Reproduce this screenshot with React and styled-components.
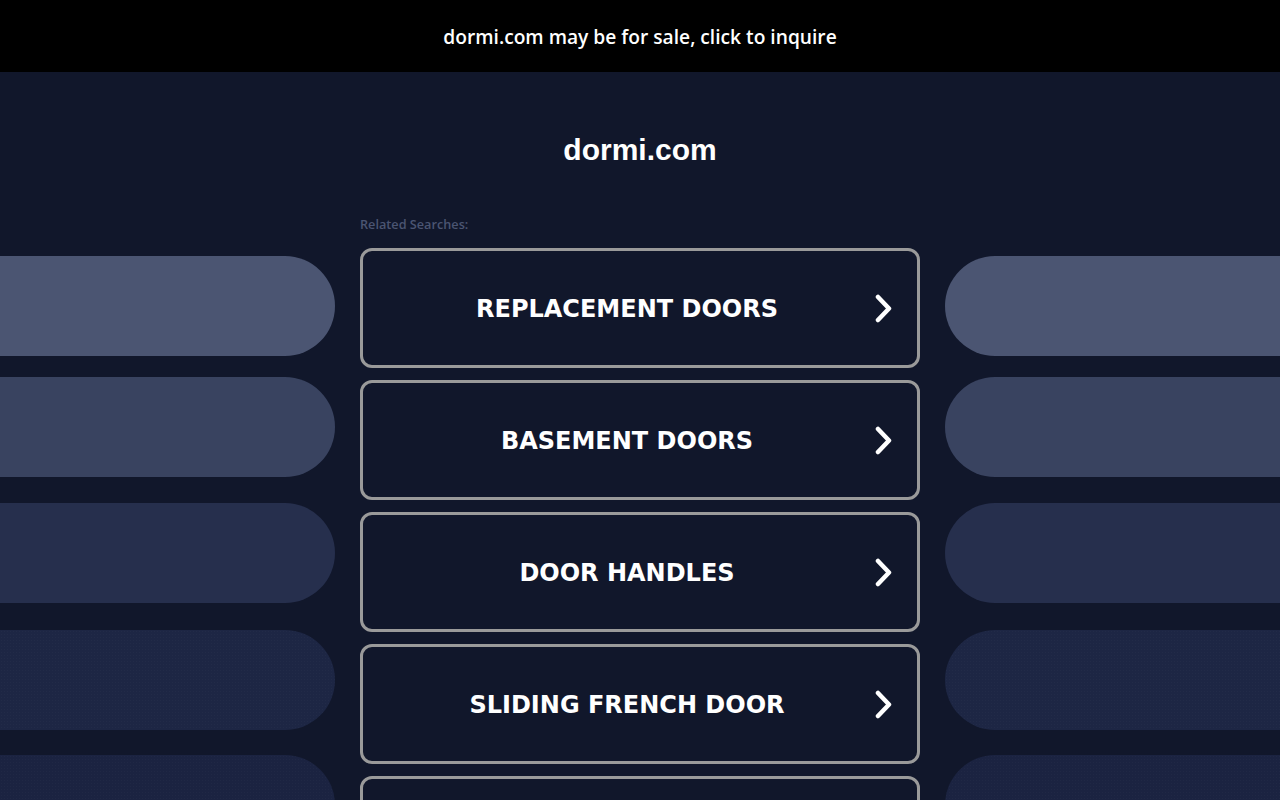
import styled, { createGlobalStyle } from "styled-components";

const searches = [
    "Replacement Doors",
    "Basement Doors",
    "Door Handles",
    "Sliding French Door",
    "Exterior Doors",
];

const pills = [
    { color: "#4b5572", gap: 0, dotted: false },
    { color: "#394360", gap: 21, dotted: false },
    { color: "#262f4d", gap: 26, dotted: false },
    { color: "#1d2644", gap: 27, dotted: true },
    { color: "#1b2341", gap: 25, dotted: true },
];

const GlobalStyle = createGlobalStyle`
    html, body {
        margin: 0;
        padding: 0;
        background: #11172b;
        overflow: hidden;
    }
`;

const Arrow = () => (
    <svg width="20" height="30" viewBox="0 0 20 30">
        <polyline
            points="4,4 15,15.5 4,27"
            fill="none"
            stroke="#ffffff"
            strokeWidth="4.5"
            strokeLinecap="round"
            strokeLinejoin="round"
        />
    </svg>
);

const App = () => {
    return (
        <Page>
            <GlobalStyle />
            <SaleBar>dormi.com may be for sale, click to inquire</SaleBar>
            <Main>
                <SideColumn $side="left">
                    {pills.map((pill, index) => (
                        <Pill
                            key={index}
                            $side="left"
                            $color={pill.color}
                            $gap={pill.gap}
                            $dotted={pill.dotted}
                        />
                    ))}
                </SideColumn>
                <Center>
                    <Domain>dormi.com</Domain>
                    <RelatedLabel>Related Searches:</RelatedLabel>
                    <SearchList>
                        {searches.map((search) => (
                            <SearchButton key={search}>
                                <SearchText>{search}</SearchText>
                                <Arrow />
                            </SearchButton>
                        ))}
                    </SearchList>
                </Center>
                <SideColumn $side="right">
                    {pills.map((pill, index) => (
                        <Pill
                            key={index}
                            $side="right"
                            $color={pill.color}
                            $gap={pill.gap}
                            $dotted={pill.dotted}
                        />
                    ))}
                </SideColumn>
            </Main>
        </Page>
    );
};

const Page = styled.div`
    height: 100vh;
    overflow: hidden;
    background: #11172b;
`;

const SaleBar = styled.div`
    height: 72px;
    background: #000000;
    color: #ffffff;
    display: flex;
    align-items: center;
    justify-content: center;
    font-family: "Open Sans", "Liberation Sans", sans-serif;
    font-weight: 600;
    font-size: 19.2px;
`;

const Main = styled.div`
    display: grid;
    grid-template-columns: 1fr 560px 1fr;
`;

const SideColumn = styled.div`
    display: flex;
    flex-direction: column;
    padding-top: 184px;
    padding-left: ${(props) => (props.$side === "right" ? "25px" : "0")};
    padding-right: ${(props) => (props.$side === "left" ? "25px" : "0")};
`;

const Pill = styled.div`
    height: 100px;
    margin-top: ${(props) => props.$gap}px;
    background-color: ${(props) => props.$color};
    background-image: ${(props) =>
        props.$dotted
            ? "radial-gradient(rgba(255, 255, 255, 0.025) 0.8px, transparent 0.8px)"
            : "none"};
    background-size: 3px 3px;
    border-radius: ${(props) =>
        props.$side === "left" ? "0 50px 50px 0" : "50px 0 0 50px"};
`;

const Center = styled.div`
    display: flex;
    flex-direction: column;
    padding-top: 60px;
`;

const Domain = styled.h1`
    margin: 0;
    text-align: center;
    color: #ffffff;
    font-family: "Liberation Sans", Arial, sans-serif;
    font-weight: 700;
    font-size: 30px;
    line-height: 36px;
`;

const RelatedLabel = styled.div`
    margin-top: 48px;
    color: #4b5572;
    font-family: "Open Sans", "Liberation Sans", sans-serif;
    font-weight: 600;
    font-size: 12.7px;
    line-height: 16px;
`;

const SearchList = styled.div`
    display: flex;
    flex-direction: column;
    gap: 12px;
    margin-top: 16px;
`;

const SearchButton = styled.div`
    box-sizing: border-box;
    height: 120px;
    border: 3px solid #9a9a9a;
    border-radius: 12px;
    display: flex;
    align-items: center;
    padding: 0 23px 0 37px;
    cursor: pointer;
`;

const SearchText = styled.span`
    flex: 1;
    margin-right: 20px;
    padding-top: 2px;
    text-align: center;
    color: #ffffff;
    text-transform: uppercase;
    font-family: "DejaVu Sans", Verdana, sans-serif;
    font-weight: 700;
    font-size: 24px;
`;

export default App;
